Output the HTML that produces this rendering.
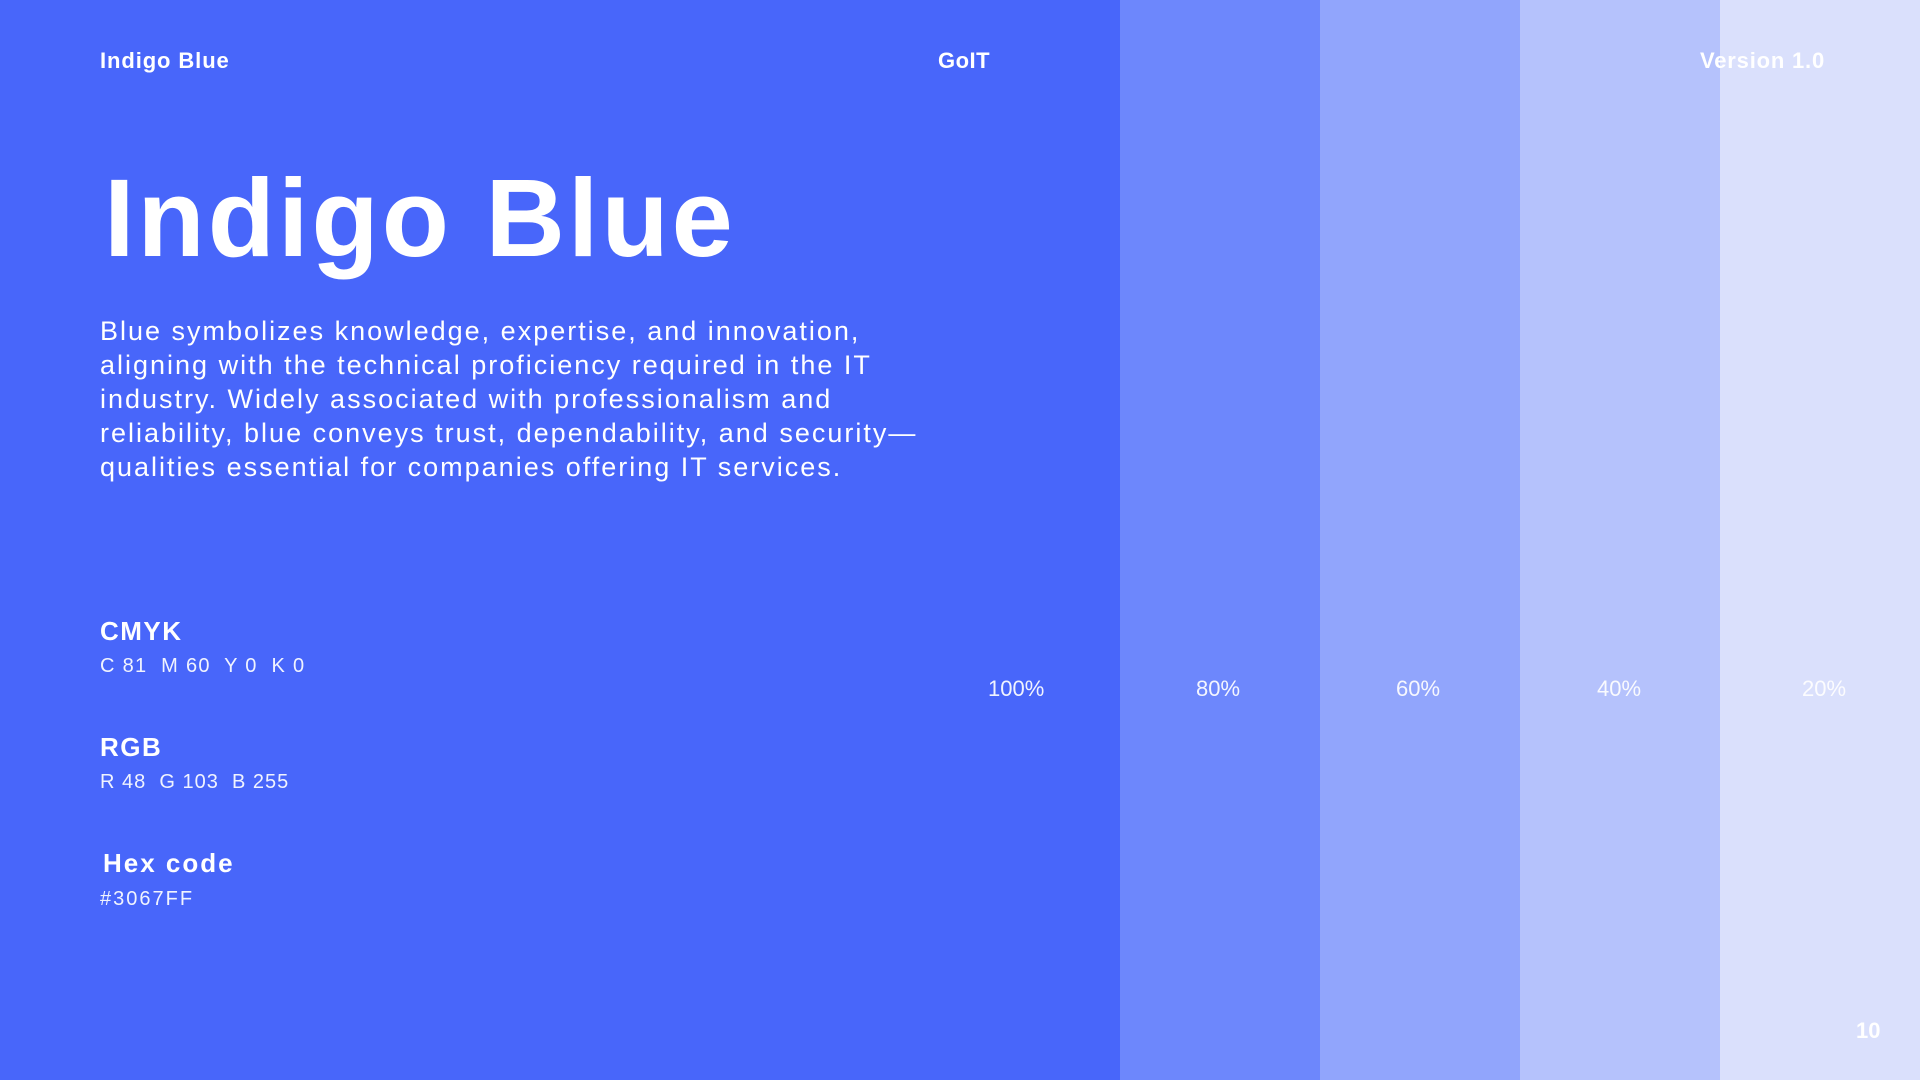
<!DOCTYPE html>
<html><head><meta charset="utf-8"><style>
html,body{margin:0;padding:0;}
body{width:1920px;height:1080px;position:relative;overflow:hidden;background:#4866FA;font-family:"Liberation Sans",sans-serif;color:#fff;}
.s{position:absolute;top:0;height:1080px;width:200px;}
.t{position:absolute;line-height:1;white-space:nowrap;}
.b{font-weight:bold;}
.l{font-weight:normal;opacity:.92;}
</style></head><body>
<div class="s" style="left:1120px;background:#6D87FC"></div>
<div class="s" style="left:1320px;background:#91A5FC"></div>
<div class="s" style="left:1520px;background:#B5C2FC"></div>
<div class="s" style="left:1720px;background:#DAE0FC"></div>

<div class="t b" style="left:100px;top:50px;font-size:22px;letter-spacing:0.9px">Indigo Blue</div>
<div class="t b" style="left:938px;top:50px;font-size:22px;letter-spacing:0.5px">GoIT</div>
<div class="t b" style="left:1700px;top:50px;font-size:22px;letter-spacing:0.8px">Version 1.0</div>

<div class="t b" style="left:104px;top:164px;font-size:110px;letter-spacing:3px">Indigo Blue</div>

<div style="position:absolute;left:100px;top:314px;font-size:27px;line-height:34px;white-space:nowrap;letter-spacing:2px">Blue symbolizes knowledge, expertise, and innovation,<br>aligning with the technical proficiency required in the IT<br>industry. Widely associated with professionalism and<br>reliability, blue conveys trust, dependability, and security—<br>qualities essential for companies offering IT services.</div>

<div class="t b" style="left:100px;top:618px;font-size:26px;letter-spacing:1.5px">CMYK</div>
<div class="t l" style="left:100px;top:656px;font-size:20px;letter-spacing:1.3px">C 81&nbsp; M 60&nbsp; Y 0&nbsp; K 0</div>
<div class="t b" style="left:100px;top:734px;font-size:26px;letter-spacing:1.5px">RGB</div>
<div class="t l" style="left:100px;top:772px;font-size:20px;letter-spacing:1px">R 48&nbsp; G 103&nbsp; B 255</div>
<div class="t b" style="left:103px;top:850px;font-size:26px;letter-spacing:2px">Hex code</div>
<div class="t l" style="left:100px;top:889px;font-size:20px;letter-spacing:2px">#3067FF</div>

<div class="t l" style="left:988px;top:678px;font-size:22px">100%</div>
<div class="t l" style="left:1196px;top:678px;font-size:22px">80%</div>
<div class="t l" style="left:1396px;top:678px;font-size:22px">60%</div>
<div class="t l" style="left:1597px;top:678px;font-size:22px">40%</div>
<div class="t l" style="left:1802px;top:678px;font-size:22px">20%</div>

<div class="t b" style="left:1856px;top:1020px;font-size:22px">10</div>
</body></html>
